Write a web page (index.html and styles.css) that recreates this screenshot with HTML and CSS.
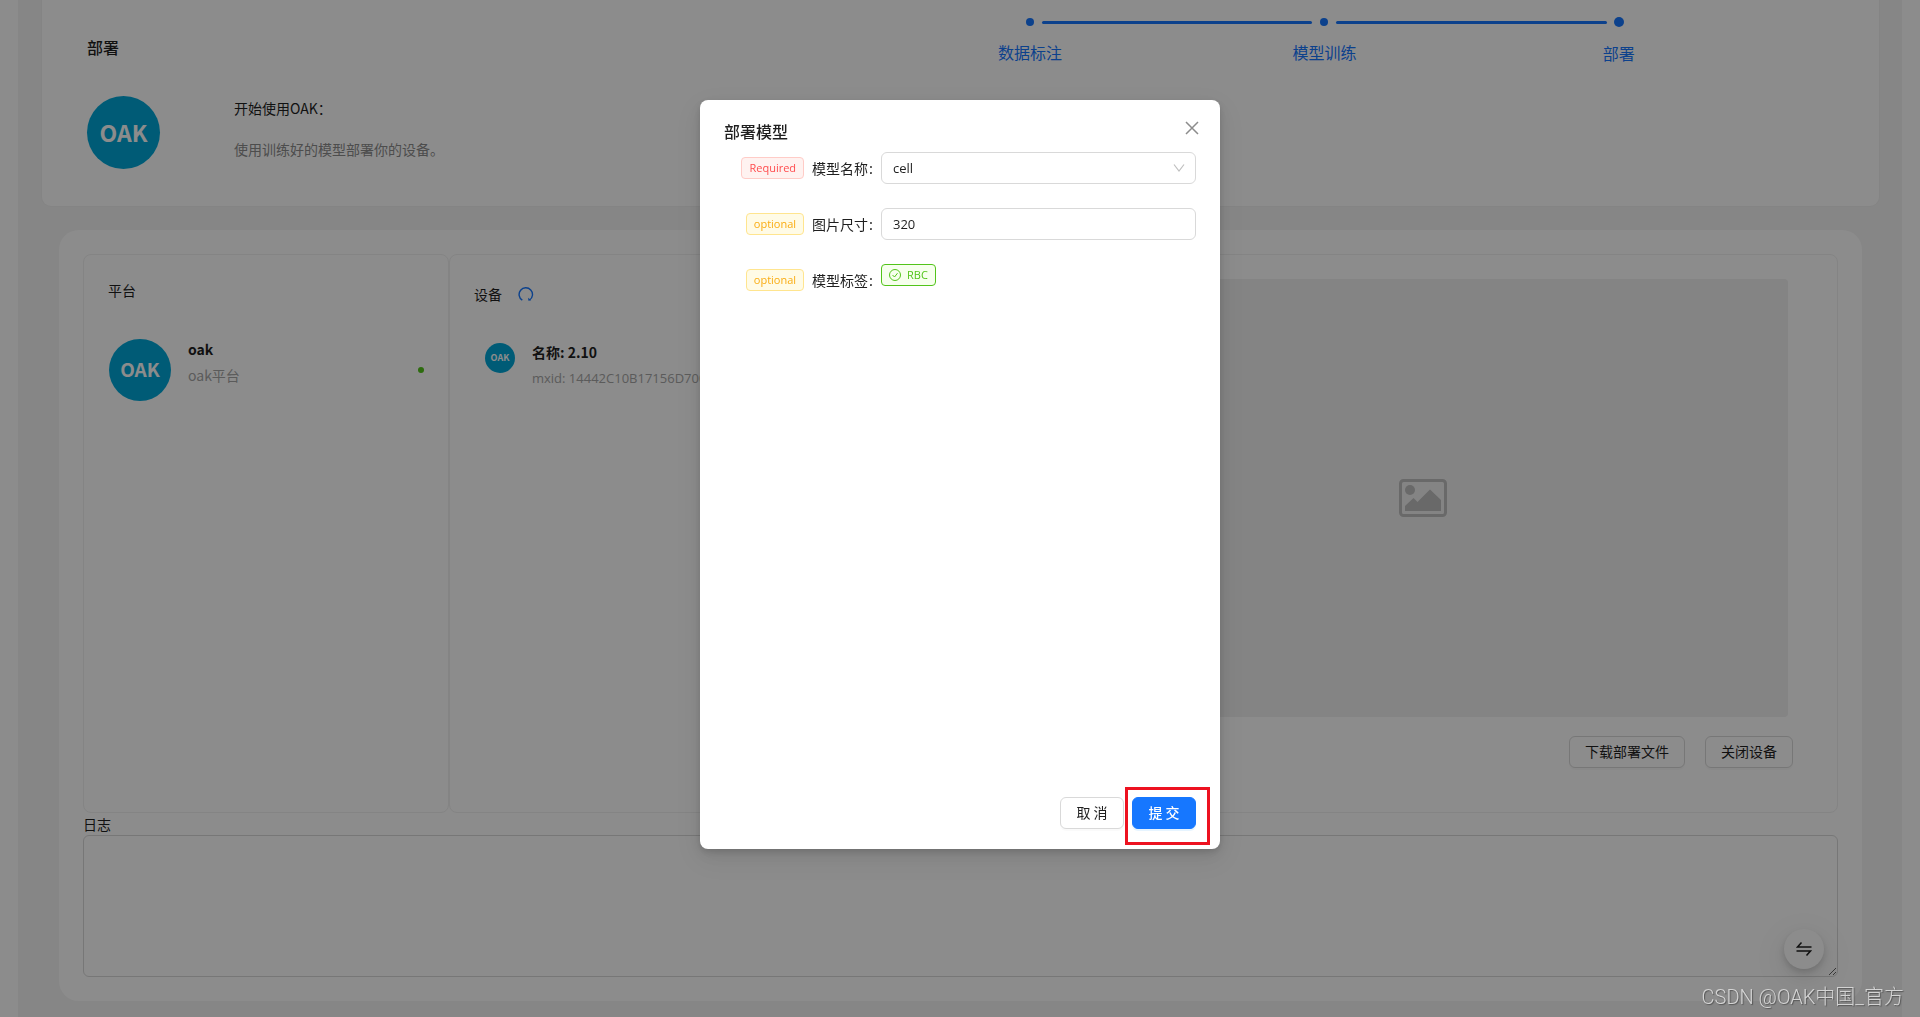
FILE: index.html
```html
<!DOCTYPE html>
<html lang="zh-CN">
<head>
<meta charset="utf-8">
<meta name="viewport" content="width=device-width, initial-scale=1">
<title>部署</title>
<link rel="stylesheet" href="styles.css">
</head>
<body>
<main class="page">
  <header class="intro">
    <div class="intro-main">
      <h1 class="intro-title">部署</h1>
      <div class="intro-row">
        <span class="avatar avatar-lg">OAK</span>
        <div class="intro-text">
          <p>开始使用OAK：</p>
          <p class="muted">使用训练好的模型部署你的设备。</p>
        </div>
      </div>
    </div>
    <ol class="steps">
      <li class="step">数据标注</li>
      <li class="step">模型训练</li>
      <li class="step step-active">部署</li>
    </ol>
  </header>

  <section class="board">
    <div class="panels">
      <section class="panel panel-platform">
        <h2 class="panel-title">平台</h2>
        <div class="item">
          <span class="avatar avatar-md">OAK</span>
          <div class="item-text">
            <strong>oak</strong>
            <span class="faint">oak平台</span>
          </div>
          <span class="status"></span>
        </div>
      </section>
      <section class="panel panel-device">
        <div class="panel-head">
          <h2 class="panel-title">设备</h2>
          <button class="icon-button" type="button" aria-label="刷新">
            <svg width="16" height="16" viewBox="0 0 16 16" fill="none" stroke="#1677ff" stroke-width="1.4"><path d="M4.300 14.200A6.700 6.700 0 1 1 11.600 14"/><path d="M10.200 11.700L10.400 14.800L13.200 14.200Z" fill="#1677ff" stroke="none"/></svg>
          </button>
        </div>
        <div class="item item-device">
          <span class="avatar avatar-sm">OAK</span>
          <div class="item-text">
            <strong>名称: 2.10</strong>
            <span class="faint latin">mxid: 14442C10B17156D700</span>
          </div>
        </div>
      </section>
      <section class="panel panel-preview">
        <div class="preview">
          <svg width="48" height="38" viewBox="0 0 48 38"><rect x="1.500" y="1.500" width="45" height="35" rx="3" fill="none" stroke="#bfbfbf" stroke-width="3"/><circle cx="11" cy="11" r="5" fill="#bfbfbf"/><path d="M6 32V27L14.500 19L18.500 23L31 10.500L42 21V32Z" fill="#bfbfbf"/></svg>
        </div>
        <div class="preview-actions">
          <button class="button" type="button">下载部署文件</button>
          <button class="button" type="button">关闭设备</button>
        </div>
      </section>
    </div>
    <label class="log-label" for="log">日志</label>
    <textarea class="log" id="log"></textarea>
  </section>
</main>

<button class="float-button" type="button" aria-label="切换">
  <svg width="16" height="16" viewBox="0 0 16 16" fill="none" stroke="#1f1f1f" stroke-width="1.500"><path d="M15.500 6H1.500L5.500 1.500"/><path d="M.5 10H14.500L10.500 14.500"/></svg>
</button>

<div class="mask">
  <section class="modal" role="dialog" aria-labelledby="modal-title">
    <button class="modal-close" type="button" aria-label="关闭">
      <svg width="14" height="14" viewBox="0 0 14 14" stroke="#8c8c8c" stroke-width="1.500"><path d="M1 1L13 13M13 1L1 13"/></svg>
    </button>
    <h2 class="modal-title" id="modal-title">部署模型</h2>
    <form class="form">
      <div class="field">
        <label class="field-label" for="model"><span class="tag tag-required">Required</span><span>模型名称</span><span class="colon">:</span></label>
        <div class="select-wrap">
          <select class="control" id="model"><option>cell</option></select>
          <svg class="chevron" width="12" height="12" viewBox="0 0 12 12" fill="none" stroke="#bfbfbf" stroke-width="1.200"><path d="M1 2.500L6 9L11 2.500"/></svg>
        </div>
      </div>
      <div class="field">
        <label class="field-label" for="size"><span class="tag tag-optional">optional</span><span>图片尺寸</span><span class="colon">:</span></label>
        <input class="control" id="size" type="text" value="320">
      </div>
      <div class="field">
        <span class="field-label"><span class="tag tag-optional">optional</span><span>模型标签</span><span class="colon">:</span></span>
        <span class="tag tag-success">
          <svg width="12" height="12" viewBox="0 0 12 12" fill="none" stroke="#52c41a"><circle cx="6" cy="6" r="5.500"/><path d="M3.500 6L5.500 8L8.500 4.200"/></svg>
          RBC
        </span>
      </div>
    </form>
    <footer class="modal-footer">
      <button class="button" type="button">取 消</button>
      <span class="submit-spot"><button class="button button-primary" type="button">提 交</button></span>
    </footer>
  </section>
</div>
<div class="watermark">CSDN @OAK中国_官方</div>
</body>
</html>
```

FILE: styles.css
```css
* {
  box-sizing: border-box;
}

body {
  margin: 0;
  background: #fff;
  color: #1f1f1f;
  font: 14px/22px "Noto Sans CJK SC", sans-serif;
}

h1, h2, p, ol {
  margin: 0;
  padding: 0;
  font-weight: 400;
  font-size: 14px;
}

button, input, select, textarea {
  font: inherit;
  color: inherit;
}

.page {
  min-height: 100vh;
  margin: 0 18px;
  padding: 0 22px 15px 23px;
  background: #f5f5f5;
}

.intro {
  display: flex;
  justify-content: space-between;
  padding: 0 113px 37px 45px;
  border: 1px solid #f0f0f0;
  border-top: 0;
  border-radius: 0 0 10px 10px;
  background: #fff;
}

.intro-title {
  padding: 35px 0 37px;
  font-size: 16px;
  line-height: 24px;
  font-weight: 500;
}

.intro-row {
  display: flex;
  gap: 74px;
}

.intro-text {
  display: grid;
  align-content: start;
  gap: 19px;
  padding-top: 1px;
}

.muted {
  color: #8c8c8c;
}

.faint {
  color: #a6a6a6;
}

.latin {
  font-family: "Open Sans", "Noto Sans CJK SC", sans-serif;
  font-size: 13px;
}

.avatar {
  display: flex;
  flex: none;
  align-items: center;
  justify-content: center;
  border-radius: 50%;
  background: #00a7d8;
  color: #fff;
  font-weight: 700;
}

.avatar-lg {
  width: 73px;
  height: 73px;
  padding-bottom: 2px;
  font-size: 23px;
}

.avatar-md {
  width: 62px;
  height: 62px;
  padding-bottom: 2px;
  font-size: 19px;
}

.avatar-sm {
  width: 30px;
  height: 30px;
  font-size: 9px;
}

.steps {
  display: grid;
  grid-template-columns: repeat(3, 1fr);
  width: 52.6%;
  height: 80px;
  list-style: none;
}

.step {
  position: relative;
  display: flex;
  flex-direction: column;
  align-items: center;
  gap: 14px;
  padding-top: 18px;
  color: #1677ff;
  font-size: 16px;
  line-height: 24px;
}

.step::before {
  content: "";
  width: 8px;
  height: 8px;
  border-radius: 50%;
  background: #1677ff;
}

.step::after {
  content: "";
  position: absolute;
  top: 21px;
  left: calc(50% + 12px);
  width: calc(100% - 24px);
  height: 3px;
  border-radius: 2px;
  background: #1677ff;
}

.step-active {
  padding-top: 17px;
}

.step-active::before {
  width: 10px;
  height: 10px;
}

.step-active::after {
  display: none;
}

.board {
  margin: 23px 18px 0;
  padding: 24px;
  border-radius: 20px;
  background: #fff;
}

.panels {
  display: flex;
}

.panel {
  padding: 24px;
  border: 1px solid #f0f0f0;
  border-radius: 8px;
}

.panel-platform {
  flex: 0 0 366px;
}

.panel-device {
  flex: 0 0 366px;
  padding-top: 28px;
}

.panel-preview {
  flex: 1;
  padding: 24px 44px 44px 242px;
}

.panel-head {
  display: flex;
  align-items: center;
  gap: 16px;
}

.icon-button {
  display: flex;
  padding: 0;
  border: 0;
  background: none;
}

.item {
  display: flex;
  align-items: center;
  gap: 17px;
  padding: 37px 0 0 1px;
}

.item-device {
  padding: 36px 0 0 11px;
}

.item-text {
  display: grid;
  gap: 4px;
  padding-bottom: 16px;
  white-space: nowrap;
}

.item-device .item-text {
  padding: 0;
}

.item-device .avatar {
  align-self: flex-start;
  margin-top: 2px;
}

.status {
  width: 6px;
  height: 6px;
  margin-left: auto;
  border-radius: 50%;
  background: #52c41a;
}

.preview {
  display: flex;
  align-items: center;
  justify-content: center;
  height: 438px;
  margin-right: 5px;
  border-radius: 4px;
  background: #f0f0f0;
}

.preview-actions {
  display: flex;
  justify-content: flex-end;
  gap: 20px;
  padding-top: 19px;
}

.button {
  min-width: 64px;
  height: 32px;
  padding: 3px 15px 5px;
  border: 1px solid #d9d9d9;
  border-radius: 6px;
  background: #fff;
  box-shadow: 0 2px 0 rgba(0, 0, 0, 0.02);
}

.button-primary {
  border-color: #1677ff;
  background: #1677ff;
  box-shadow: 0 2px 0 rgba(5, 145, 255, 0.1);
  color: #fff;
  font-weight: 500;
}

.log-label {
  display: block;
}

.log {
  display: block;
  width: 100%;
  height: 142px;
  border: 1px solid #d9d9d9;
  border-radius: 6px;
  background: #fff;
  outline: 0;
}

.float-button {
  position: fixed;
  right: 96px;
  bottom: 48px;
  display: flex;
  align-items: center;
  justify-content: center;
  width: 40px;
  height: 40px;
  border: 0;
  border-radius: 50%;
  background: #fff;
  box-shadow: 0 6px 16px rgba(0, 0, 0, 0.08), 0 3px 6px rgba(0, 0, 0, 0.12), 0 9px 28px 8px rgba(0, 0, 0, 0.05);
}

.mask {
  position: fixed;
  inset: 0;
  display: flex;
  align-items: flex-start;
  justify-content: center;
  padding-top: 100px;
  background: rgba(0, 0, 0, 0.45);
}

.modal {
  position: relative;
  width: 520px;
  padding: 19px 24px 20px;
  border-radius: 8px;
  background: #fff;
  box-shadow: 0 6px 16px rgba(0, 0, 0, 0.08), 0 3px 6px rgba(0, 0, 0, 0.12), 0 9px 28px 8px rgba(0, 0, 0, 0.05);
}

.modal-close {
  position: absolute;
  top: 17px;
  right: 17px;
  display: flex;
  padding: 4px;
  border: 0;
  background: none;
}

.modal-title {
  margin-bottom: 9px;
  font-size: 16px;
  line-height: 24px;
  font-weight: 500;
}

.form {
  display: grid;
  align-content: start;
  gap: 24px;
  min-height: 633px;
}

.field {
  display: grid;
  grid-template-columns: 157px 1fr;
  align-items: start;
}

.field-label {
  display: flex;
  align-items: center;
  justify-content: flex-end;
  height: 32px;
}

.colon {
  padding: 0 8px 0 1px;
}

.tag {
  display: inline-flex;
  align-items: center;
  justify-self: start;
  gap: 6px;
  height: 22px;
  margin-right: 8px;
  padding: 0 7px;
  border: 1px solid;
  border-radius: 4px;
  font-family: "Open Sans", "Noto Sans CJK SC", sans-serif;
  font-size: 11px;
}

.tag-required {
  border-color: #ffccc7;
  background: #fff2f0;
  color: #ff4d4f;
}

.tag-optional {
  border-color: #ffe58f;
  background: #fffbe6;
  color: #faad14;
}

.tag-success {
  border-color: #52c41a;
  background: #f6ffed;
  color: #52c41a;
}

.select-wrap {
  display: grid;
  align-items: center;
}

.select-wrap > * {
  grid-area: 1 / 1;
}

.chevron {
  justify-self: end;
  margin-right: 11px;
}

.control {
  width: 100%;
  height: 32px;
  padding: 4px 11px;
  border: 1px solid #d9d9d9;
  border-radius: 6px;
  appearance: none;
  background: #fff;
  font-family: "Open Sans", "Noto Sans CJK SC", sans-serif;
  font-size: 13px;
}

.modal-footer {
  display: flex;
  justify-content: flex-end;
  gap: 8px;
  margin-top: 12px;
}

.submit-spot {
  position: relative;
  display: flex;
}

.submit-spot::after {
  content: "";
  position: absolute;
  inset: -10px -14px -16px -7px;
  border: 3px solid #ed1220;
  pointer-events: none;
}

.watermark {
  position: fixed;
  right: 16px;
  bottom: 5px;
  color: #d4d4d4;
  font-family: Roboto, "Noto Sans CJK SC", sans-serif;
  font-size: 20px;
  line-height: 30px;
  font-weight: 300;
  text-shadow: 1px 1px 1px #555;
}
```
